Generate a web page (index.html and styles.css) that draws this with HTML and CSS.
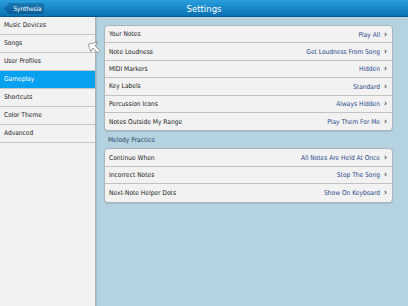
FILE: index.html
```html
<!DOCTYPE html>
<html>
<head>
  <meta charset="UTF-8">
  <title>Settings</title>
  <link rel="stylesheet" href="styles.css">
</head>
<body>
  <div class="app">
    <header class="topbar">
      <button class="back-btn">Synthesia</button>
      <h1>Settings</h1>
    </header>

    <div class="main">
      <nav class="sidebar">
        <ul>
          <li>Music Devices</li>
          <li>Songs</li>
          <li>User Profiles</li>
          <li class="active">Gameplay</li>
          <li>Shortcuts</li>
          <li>Color Theme</li>
          <li>Advanced</li>
        </ul>
      </nav>

      <section class="content">
        <ul class="group">
          <li><span class="label">Your Notes</span><span class="value">Play All</span></li>
          <li><span class="label">Note Loudness</span><span class="value">Get Loudness From Song</span></li>
          <li><span class="label">MIDI Markers</span><span class="value">Hidden</span></li>
          <li><span class="label">Key Labels</span><span class="value">Standard</span></li>
          <li><span class="label">Percussion Icons</span><span class="value">Always Hidden</span></li>
          <li><span class="label">Notes Outside My Range</span><span class="value">Play Them For Me</span></li>
        </ul>

        <h2>Melody Practice</h2>
        <ul class="group">
          <li><span class="label">Continue When</span><span class="value">All Notes Are Held At Once</span></li>
          <li><span class="label">Incorrect Notes</span><span class="value">Stop The Song</span></li>
          <li><span class="label">Next-Note Helper Dots</span><span class="value">Show On Keyboard</span></li>
        </ul>
      </section>
    </div>

    <!-- mouse pointer over the sidebar edge -->
    <svg class="pointer" width="15" height="15" viewBox="0 0 14 14">
      <polygon points="1,3 10,1 7.5,4.5 12,9 10,11 5.5,6.5 3.5,10" fill="#fff" stroke="#8a8a8a" stroke-width="0.8" stroke-linejoin="round"/>
    </svg>
  </div>
</body>
</html>
```

FILE: styles.css
```css
* {
  box-sizing: border-box;
}
body {
  margin: 0;
  font-family: 'DejaVu Sans Condensed', 'DejaVu Sans', sans-serif;
  font-size: 6.6px;
  color: #222;
}
ul {
  list-style: none;
  margin: 0;
  padding: 0;
}
.app {
  position: relative;
  width: 408px;
  height: 306px;
  overflow: hidden;
  display: flex;
  flex-direction: column;
  background: #b4d2df;
}

/* top bar */
.topbar {
  height: 17px;
  flex: none;
  display: flex;
  align-items: center;
  justify-content: center;
  background: linear-gradient(#2a9edc, #0a72b4);
  border-bottom: 1px solid #0a558a;
  position: relative;
}
.topbar h1 {
  margin: 0;
  font-family: 'DejaVu Sans Condensed', 'DejaVu Sans', sans-serif;
  font-weight: normal;
  font-size: 9.5px;
  color: #fff;
}
.back-btn {
  position: absolute;
  left: 4px;
  top: 3px;
  height: 11px;
  width: 40px;
  padding: 0 0 0 7px;
  border: none;
  font-family: inherit;
  font-size: 6.4px;
  color: #fff;
  background: linear-gradient(#1878b4, #0b5d96);
  clip-path: polygon(0 50%, 5px 0, 100% 0, 100% 100%, 5px 100%);
  border-radius: 0 2px 2px 0;
}

.main {
  flex: 1;
  display: flex;
}

/* left list */
.sidebar {
  width: 96px;
  flex: none;
  background: #f2f2f2;
  border-right: 1px solid #a7b2b8;
  box-shadow: 1px 0 1px rgba(0, 0, 0, 0.08);
}
.sidebar li {
  height: 18px;
  line-height: 17px;
  padding-left: 4px;
  border-bottom: 1px solid #c6c6c6;
}
.sidebar li.active {
  background: #08a1ef;
  color: #fff;
}

/* settings groups */
.content {
  flex: 1;
  padding: 8px 15px 0 8px;
}
.group {
  background: #f2f2f2;
  border: 1px solid #aab6bd;
  border-radius: 4px;
  box-shadow: 0 1px 1px rgba(0, 0, 0, 0.1);
  overflow: hidden;
}
.group li {
  height: 17.4px;
  display: flex;
  align-items: center;
  justify-content: space-between;
  padding: 0 5px 0 4px;
  border-bottom: 1px solid #c2c2c2;
}
.group li:last-child {
  border-bottom: none;
}
.value {
  color: #2a4a8a;
}
.value::after {
  content: "›";
  display: inline-block;
  margin-left: 4px;
  font-weight: bold;
  font-size: 8px;
  color: #444;
}
.content h2 {
  margin: 0;
  height: 17px;
  line-height: 19px;
  padding-left: 4px;
  font-size: 6.6px;
  font-weight: normal;
  color: #2a4565;
}

.pointer {
  position: absolute;
  left: 87px;
  top: 41px;
}
```
